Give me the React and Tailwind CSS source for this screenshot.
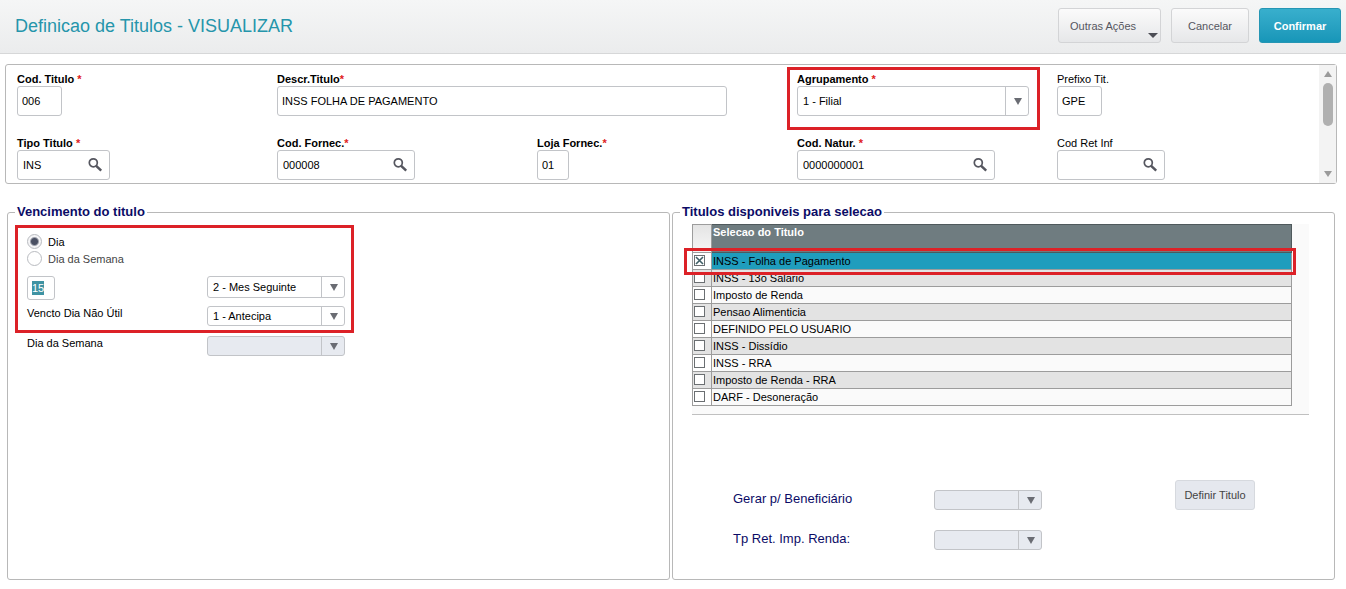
import { useState } from 'react'

const TITULOS = [
  'INSS - Folha de Pagamento',
  'INSS - 13o Salario',
  'Imposto de Renda',
  'Pensao Alimenticia',
  'DEFINIDO PELO USUARIO',
  'INSS - Dissídio',
  'INSS - RRA',
  'Imposto de Renda - RRA',
  'DARF - Desoneração',
]

function Caret({ className = 'w-2 h-[7px] fill-[#6a6c73]' }) {
  return (
    <svg viewBox="0 0 8 7" preserveAspectRatio="none" className={className} aria-hidden="true">
      <path d="M0 0H8L4 7Z" />
    </svg>
  )
}

function SearchIcon() {
  return (
    <svg viewBox="0 0 16 16" fill="none" stroke="#55565f" className="w-4 h-4">
      <circle cx="6.3" cy="5.8" r="4" strokeWidth="1.7" />
      <path d="M9.2 8.8L14.2 13.6" strokeWidth="2.5" />
    </svg>
  )
}

function Field({ id, label, required, className = '', children }) {
  return (
    <div className={`relative flex flex-col items-start ${className}`}>
      <label htmlFor={id} className={`h-[14px] leading-[14px] whitespace-pre ${required ? 'font-bold' : ''}`}>
        {label}
        {required && <span className="text-[#e02020]">*</span>}
      </label>
      {children}
    </div>
  )
}

function TextBox({ id, defaultValue, className }) {
  return (
    <input
      id={id}
      defaultValue={defaultValue}
      className={`h-[30px] px-1 border border-[#c2c4c8] rounded-[3px] bg-white outline-none ${className}`}
    />
  )
}

function LookupBox({ id, defaultValue, label, className }) {
  return (
    <div className={`flex items-center h-[30px] pl-[5px] pr-[6px] border border-[#c2c4c8] rounded-[3px] bg-white ${className}`}>
      <input id={id} defaultValue={defaultValue} className="flex-1 min-w-0 outline-none" />
      <button type="button" aria-label={`Pesquisar ${label}`} className="cursor-pointer">
        <SearchIcon />
      </button>
    </div>
  )
}

function SelectBox({ id, label, options = [], disabled, className }) {
  return (
    <div className={`relative ${className}`}>
      <select
        id={id}
        aria-label={label}
        disabled={disabled}
        className="appearance-none w-full h-full pl-[5px] pr-7 border border-[#c2c4c8] rounded-[3px] bg-white outline-none disabled:bg-[#e7eaf0] disabled:opacity-100"
      >
        {options.map((o) => (
          <option key={o}>{o}</option>
        ))}
      </select>
      <div className="absolute right-0 inset-y-px w-6 flex items-center justify-center border-l border-[#c2c4c8] pointer-events-none">
        <Caret />
      </div>
    </div>
  )
}

function Radio({ label, value, current, onChange }) {
  const on = current === value
  return (
    <label className={`flex items-center gap-[6px] h-[17px] ${on ? '' : 'text-[#444]'}`}>
      <input
        type="radio"
        name="vencimento"
        checked={on}
        onChange={() => onChange(value)}
        className="appearance-none w-[15px] h-[15px] rounded-full border border-[#b9bbc0] bg-white checked:bg-[radial-gradient(circle,#4a5063_3px,#f4f4f6_5px)]"
      />
      {label}
    </label>
  )
}

function TituloRow({ name, index, checked, onToggle }) {
  const id = `titulo-${index}`
  let rowBg = index % 2 ? 'bg-[#e3e3e3]' : 'bg-[#fafafa]'
  if (checked) rowBg = 'bg-[#1f9dbd]'
  return (
    <tr className="h-[17px]">
      <td className={`p-0 border-b border-x border-[#9c9c9c] ${index % 2 ? 'bg-[#e3e3e3]' : 'bg-white'}`}>
        <div className="relative flex items-start pl-px pt-[2px] h-4">
          <input
            id={id}
            type="checkbox"
            checked={checked}
            onChange={onToggle}
            className="appearance-none w-[11px] h-[11px] border border-[#6b6f72] bg-white"
          />
          {checked && (
            <svg viewBox="0 0 11 11" stroke="#3f5f66" strokeWidth="1.6" className="absolute left-px top-[2px] w-[11px] h-[11px] pointer-events-none">
              <path d="M2 2L9 9M9 2L2 9" />
            </svg>
          )}
        </div>
      </td>
      <td className={`p-0 pl-px border-b border-r border-[#9c9c9c] ${rowBg}`}>
        <label htmlFor={id} className="block h-4 leading-4">{name}</label>
      </td>
    </tr>
  )
}

export default function App() {
  const [modo, setModo] = useState('dia')
  const [selected, setSelected] = useState([0])

  const toggle = (i) => () => {
    setSelected((s) => (s.includes(i) ? s.filter((x) => x !== i) : [...s, i]))
  }

  return (
    <div className="min-h-screen flex flex-col bg-white text-black text-[11px] leading-4 font-['Liberation_Sans',Arial,sans-serif]">
      {/* Title bar */}
      <header className="flex items-center justify-between pl-[15px] pr-[5px] pt-2 pb-[10px] bg-linear-to-b from-[#f5f6f6] to-[#ebeced] border-b border-[#d6d7d8]">
        <h1 className="text-[18px] leading-6 text-[#2595ab]">Definicao de Titulos - VISUALIZAR</h1>
        <div className="flex gap-[10px]">
          <button type="button" className="relative w-[103px] h-[35px] pl-[11px] text-left text-[#55565f] border border-[#d3d4d6] rounded-[3px] bg-linear-to-b from-[#fbfbfb] to-[#e6e7e9] cursor-pointer">
            Outras Ações
            <Caret className="absolute right-[2px] bottom-1 w-[10px] h-[5px] fill-[#4c4d55]" />
          </button>
          <button type="button" className="w-[78px] h-[35px] text-[#55565f] border border-[#d3d4d6] rounded-[3px] bg-linear-to-b from-[#fbfbfb] to-[#e6e7e9] cursor-pointer">
            Cancelar
          </button>
          <button type="button" className="w-[82px] h-[35px] font-bold text-white border border-[#2596b4] rounded-[3px] bg-linear-to-b from-[#38afcd] to-[#1796b8] cursor-pointer">
            Confirmar
          </button>
        </div>
      </header>

      {/* Title data */}
      <section className="flex mt-[10px] ml-[5px] mr-[9px] border border-[#b8b8b8] rounded-[3px]">
        <div className="flex-1 grid grid-cols-5 gap-y-5 pt-[7px] pb-[3px] pl-[11px] mr-[2px]">
          <Field id="cod-titulo" label="Cod. Titulo " required>
            <TextBox id="cod-titulo" defaultValue="006" className="w-[45px]" />
          </Field>
          <Field id="descr" label="Descr.Titulo" required className="col-span-2">
            <TextBox id="descr" defaultValue="INSS FOLHA DE PAGAMENTO" className="w-[450px]" />
          </Field>
          <Field id="agrupamento" label="Agrupamento " required>
            <SelectBox id="agrupamento" options={['1 - Filial']} className="w-[232px] h-[30px]" />
            <div className="absolute -left-[10px] -top-[5px] w-[253px] h-[63px] border-3 border-[#dc2127] pointer-events-none" />
          </Field>
          <Field id="prefixo" label="Prefixo Tit.">
            <TextBox id="prefixo" defaultValue="GPE" className="w-[45px]" />
          </Field>
          <Field id="tipo" label="Tipo Titulo " required>
            <LookupBox id="tipo" label="Tipo Titulo" defaultValue="INS" className="w-[93px]" />
          </Field>
          <Field id="fornec" label="Cod. Fornec." required>
            <LookupBox id="fornec" label="Cod. Fornec." defaultValue="000008" className="w-[138px]" />
          </Field>
          <Field id="loja" label="Loja Fornec." required>
            <TextBox id="loja" defaultValue="01" className="w-8" />
          </Field>
          <Field id="natur" label="Cod. Natur. " required>
            <LookupBox id="natur" label="Cod. Natur." defaultValue="0000000001" className="w-[198px]" />
          </Field>
          <Field id="ret-inf" label="Cod Ret Inf">
            <LookupBox id="ret-inf" label="Cod Ret Inf" defaultValue="" className="w-[108px]" />
          </Field>
        </div>
        <div className="w-[17px] flex flex-col items-center pt-[6px] pb-[6px] bg-[#f3f3f3]">
          <Caret className="w-2 h-[6px] rotate-180 fill-[#9a9a9a]" />
          <div className="w-[10px] h-[43px] mt-[6px] rounded-full bg-[#b0b0b0]" />
          <Caret className="w-2 h-[6px] mt-auto fill-[#9a9a9a]" />
        </div>
      </section>

      <main className="flex-1 flex gap-[2px] mt-[19px] mb-[9px] ml-[7px] mr-[11px]">
        {/* Due date */}
        <fieldset className="flex-1 min-w-0 border border-[#b8b8b8] rounded-[3px]">
          <legend className="ml-[7px] px-[2px] text-[13px] leading-[18px] font-bold text-[#0b0b66]">Vencimento do titulo</legend>
          <div className="w-[339px] ml-[7px] mt-1 pl-[9px] pt-[5px] pb-1 border-3 border-[#dc2127]">
            <Radio label="Dia" value="dia" current={modo} onChange={setModo} />
            <Radio label="Dia da Semana" value="semana" current={modo} onChange={setModo} />
            <div className="grid grid-cols-[180px_138px] items-start mt-[9px] gap-y-[6px]">
              <input
                aria-label="Dia do vencimento"
                defaultValue="15"
                className="w-7 h-6 py-1 pl-1 pr-[10px] leading-[14px] border border-[#c2c4c8] rounded-[3px] bg-[#3f93a3] bg-clip-content text-white outline-none"
              />
              <SelectBox label="Mes do vencimento" options={['2 - Mes Seguinte']} className="h-[22px]" />
              <label htmlFor="nao-util" className="leading-[14px]">Vencto Dia Não Útil</label>
              <SelectBox id="nao-util" options={['1 - Antecipa']} className="h-5" />
            </div>
          </div>
          <div className="grid grid-cols-[180px_138px] items-start ml-[19px] mt-[3px]">
            <label htmlFor="dia-semana" className="leading-[14px]">Dia da Semana</label>
            <SelectBox id="dia-semana" disabled className="h-5" />
          </div>
        </fieldset>

        {/* Available titles */}
        <fieldset className="flex-1 min-w-0 border border-[#b8b8b8] rounded-[3px]">
          <legend className="ml-[7px] px-[2px] text-[13px] leading-[18px] font-bold text-[#0b0b66]">Titulos disponiveis para selecao</legend>
          <div className="relative ml-[19px] mr-[25px] mt-[3px] pr-[17px] pb-2 bg-[#fafafa] border-b border-[#c0c0c0]">
            <table className="w-full table-fixed border-separate border-spacing-0">
              <thead>
                <tr className="h-[29px] align-top text-left">
                  <th className="w-5 p-0 border border-[#9c9c9c] bg-linear-to-b from-[#e4e4e4] to-[#f6f6f6]" aria-label="Marcar" />
                  <th className="p-0 pl-px border-y border-r border-[#4f595c] bg-[#6f7c80] text-white font-bold leading-[14px]">Selecao do Titulo</th>
                </tr>
              </thead>
              <tbody>
                {TITULOS.map((name, i) => (
                  <TituloRow key={name} name={name} index={i} checked={selected.includes(i)} onToggle={toggle(i)} />
                ))}
              </tbody>
            </table>
            <div className="absolute -left-2 right-[13px] top-6 h-[27px] border-3 border-[#dc2127] pointer-events-none" />
          </div>
          <div className="flex items-start ml-[60px] mr-[79px] mt-[65px]">
            <div className="grid grid-cols-[201px_108px] gap-y-5 pt-[10px]">
              <label htmlFor="benef" className="text-[13px] leading-[18px] text-[#0b0b66]">Gerar p/ Beneficiário</label>
              <SelectBox id="benef" disabled className="h-5" />
              <label htmlFor="tp-ret" className="text-[13px] leading-[18px] text-[#0b0b66]">Tp Ret. Imp. Renda:</label>
              <SelectBox id="tp-ret" disabled className="h-5" />
            </div>
            <button type="button" className="w-20 h-[30px] ml-auto text-[#444] border border-[#d6d9de] rounded-[3px] bg-[#e5e8ee]">
              Definir Titulo
            </button>
          </div>
        </fieldset>
      </main>
    </div>
  )
}
